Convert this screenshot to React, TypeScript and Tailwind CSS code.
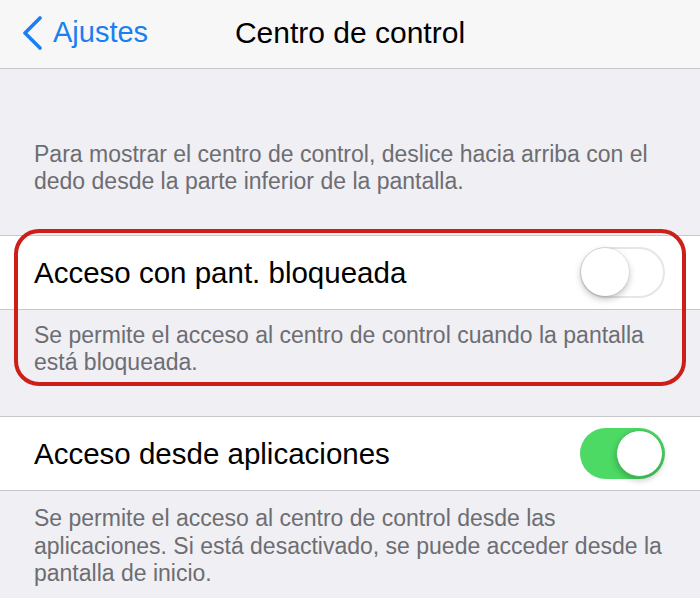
import React from "react"

function Toggle({ on }: { on: boolean }) {
  if (on) {
    return (
      <div className="relative w-[85px] h-[51px] rounded-full bg-[#4cd964] shrink-0">
        <span className="absolute right-[2px] top-[2px] w-[47px] h-[47px] rounded-full bg-white border border-[#3fbf55] shadow-[0_3px_6px_rgba(0,0,0,0.25)]" />
      </div>
    )
  }
  return (
    <div className="relative w-[85px] h-[51px] rounded-full bg-white border-[2.5px] border-[#e6e6e6] shrink-0">
      <span className="absolute left-[-1px] top-[-1px] w-[48px] h-[48px] rounded-full bg-white shadow-[0_3px_7px_rgba(0,0,0,0.25),0_0_0_1px_rgba(0,0,0,0.05)]" />
    </div>
  )
}

function Cell({ label, on }: { label: string; on: boolean }) {
  return (
    <div className="h-[75px] bg-white border-y border-[#c8c7cc] flex items-center justify-between pl-[34px] pr-[35px]">
      <span className="text-[29.5px] text-black leading-none">{label}</span>
      <Toggle on={on} />
    </div>
  )
}

export default function App() {
  return (
    <div className="w-[700px] h-[598px] overflow-hidden bg-[#efeff4] font-['Liberation_Sans',Arial,sans-serif]">
      {/* Nav bar */}
      <div className="h-[69px] bg-[#f7f7f8] border-b border-[#c8c7cc] grid grid-cols-[1fr_auto_1fr] items-center pb-[3px]">
        <div className="flex items-center pl-[22px] gap-[11px] text-[#1b7ff0]">
          <svg width="20" height="34" viewBox="0 0 20 34" fill="none">
            <polyline points="18,2 3,17 18,32" stroke="currentColor" strokeWidth="3.6" strokeLinecap="round" strokeLinejoin="round" />
          </svg>
          <span className="text-[29px] leading-none">Ajustes</span>
        </div>
        <span className="text-[30px] text-black leading-none">Centro de control</span>
        <div />
      </div>

      {/* Intro */}
      <p className="px-[34px] pt-[72px] text-[23px] leading-[27px] text-[#6d6d72]">
        Para mostrar el centro de control, deslice hacia arriba con el
        <br />
        dedo desde la parte inferior de la pantalla.
      </p>

      {/* Highlighted group */}
      <div className="relative mt-[40px]">
        <Cell label="Acceso con pant. bloqueada" on={false} />
        <p className="px-[34px] pt-[12px] text-[23px] leading-[27px] text-[#6d6d72]">
          Se permite el acceso al centro de control cuando la pantalla
          <br />
          está bloqueada.
        </p>
        <div className="absolute -top-[6px] -bottom-[10px] left-[14px] right-[14px] rounded-[25px] border-[4px] border-[#cc1f19] pointer-events-none" />
      </div>

      <div className="mt-[40px]">
        <Cell label="Acceso desde aplicaciones" on={true} />
        <p className="px-[34px] pt-[14px] text-[23px] leading-[27.5px] text-[#6d6d72]">
          Se permite el acceso al centro de control desde las
          <br />
          aplicaciones. Si está desactivado, se puede acceder desde la
          <br />
          pantalla de inicio.
        </p>
      </div>
    </div>
  )
}
